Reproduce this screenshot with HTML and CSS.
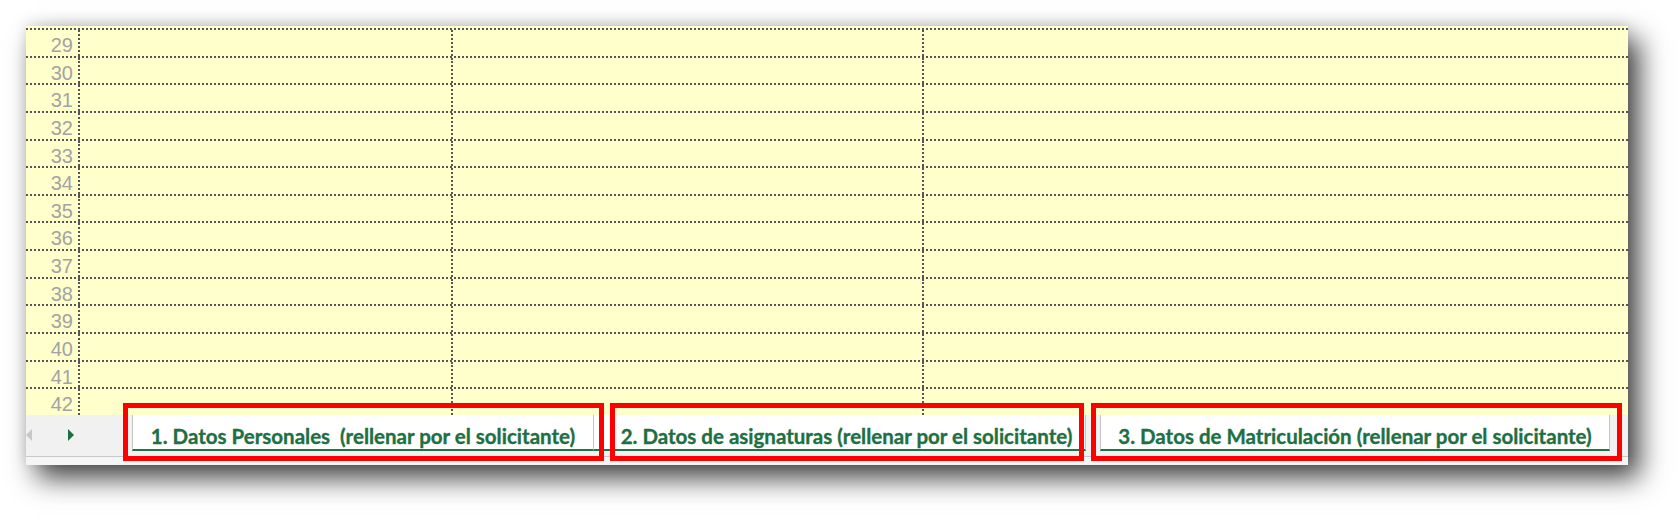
FILE: index.html
```html
<!DOCTYPE html>
<html lang="es">
<head>
<meta charset="utf-8">
<title>Hojas</title>
<link rel="stylesheet" href="styles.css">
</head>
<body>
<div class="page">
  <div class="sheet">
    <div class="grid">
      <div class="row"><div class="rh">29</div><div class="c c1"></div><div class="c c2"></div><div class="c c3"></div></div>
      <div class="row"><div class="rh">30</div><div class="c c1"></div><div class="c c2"></div><div class="c c3"></div></div>
      <div class="row"><div class="rh">31</div><div class="c c1"></div><div class="c c2"></div><div class="c c3"></div></div>
      <div class="row"><div class="rh">32</div><div class="c c1"></div><div class="c c2"></div><div class="c c3"></div></div>
      <div class="row"><div class="rh">33</div><div class="c c1"></div><div class="c c2"></div><div class="c c3"></div></div>
      <div class="row"><div class="rh">34</div><div class="c c1"></div><div class="c c2"></div><div class="c c3"></div></div>
      <div class="row"><div class="rh">35</div><div class="c c1"></div><div class="c c2"></div><div class="c c3"></div></div>
      <div class="row"><div class="rh">36</div><div class="c c1"></div><div class="c c2"></div><div class="c c3"></div></div>
      <div class="row"><div class="rh">37</div><div class="c c1"></div><div class="c c2"></div><div class="c c3"></div></div>
      <div class="row"><div class="rh">38</div><div class="c c1"></div><div class="c c2"></div><div class="c c3"></div></div>
      <div class="row"><div class="rh">39</div><div class="c c1"></div><div class="c c2"></div><div class="c c3"></div></div>
      <div class="row"><div class="rh">40</div><div class="c c1"></div><div class="c c2"></div><div class="c c3"></div></div>
      <div class="row"><div class="rh">41</div><div class="c c1"></div><div class="c c2"></div><div class="c c3"></div></div>
      <div class="row"><div class="rh">42</div><div class="c c1"></div><div class="c c2"></div><div class="c c3"></div></div>
      <div class="gridend"></div>
    </div>
    <div class="tabbar">
      <div class="nav">
        <span class="arr arr-left"></span>
        <span class="arr arr-right"></span>
      </div>
      <div class="tab tab1">1. Datos Personales&nbsp; (rellenar por el solicitante)</div>
      <div class="tab tab2">2. Datos de asignaturas (rellenar por el solicitante)</div>
      <div class="tab tab3">3. Datos de Matriculación (rellenar por el solicitante)</div>
    </div>
    <div class="foot"></div>
  </div>
  <div class="mark mark1"></div>
  <div class="mark mark2"></div>
  <div class="mark mark3"></div>
</div>
</body>
</html>
```
FILE: styles.css
```css
html, body {
  margin: 0;
  padding: 0;
  background: #ffffff;
}

.page {
  position: relative;
  width: 1680px;
  height: 522px;
  box-sizing: border-box;
  padding: 26px 0 0 26px;
  overflow: hidden;
}

.sheet {
  width: 1602px;
  background: #ffffcc;
  box-shadow: 11px 13px 26px rgba(0, 0, 0, 0.75), 0 -3px 12px rgba(0, 0, 0, 0.1);
}

.grid {
  padding-top: 2px;
  background: #ffffcc;
}

.row {
  display: grid;
  grid-template-columns: 54px 373px 471px 1fr;
  height: 27.64px;
  box-sizing: border-box;
  border-top: 2px dotted #555555;
}

.gridend {
  border-top: 2px dotted #555555;
}

.rh {
  border-right: 2px dotted #555555;
  font-family: "Liberation Sans", Arial, sans-serif;
  font-size: 20px;
  line-height: 20px;
  color: #a3a3a3;
  text-align: right;
  padding: 5px 5px 0 0;
}

.c1, .c2 {
  border-right: 2px dotted #555555;
}

.tabbar {
  display: flex;
  align-items: flex-start;
  height: 41px;
  background: #f1f1f1;
  border-bottom: 1px solid #c9c9c9;
  margin-top: -2px;
}

.nav {
  position: relative;
  width: 106px;
  height: 41px;
  flex: none;
}

.arr {
  display: block;
  width: 0;
  height: 0;
  border-top: 6px solid transparent;
  border-bottom: 6px solid transparent;
  position: absolute;
  top: 14px;
}

.arr-left {
  left: 0;
  border-right: 6px solid #c8c8c8;
}

.arr-right {
  left: 42px;
  border-left: 6px solid #1e6f42;
}

.tab {
  flex: none;
  height: 36px;
  box-sizing: border-box;
  background: #ffffff;
  border-bottom: 2px solid #217346;
  font-family: Lato, "Open Sans", sans-serif;
  font-weight: 700;
  font-size: 20.5px;
  line-height: 22px;
  padding-top: 10px;
  color: #1e6f42;
  -webkit-text-stroke: 0.35px #1e6f42;
  text-align: center;
  white-space: nowrap;
}

.tab1 {
  width: 462px;
  border-left: 1px solid #c6c6c6;
  border-right: 1px solid #c6c6c6;
}

.tab2 {
  width: 492px;
  padding-left: 14px;
  border-right: 1px solid #c6c6c6;
}

.tab3 {
  width: 510px;
  margin-left: 14px;
  border-left: 1px solid #c6c6c6;
  border-right: 1px solid #c6c6c6;
}

.foot {
  height: 8px;
  background: #f5f5f5;
}

.mark {
  position: absolute;
  top: 403px;
  height: 58px;
  box-sizing: border-box;
  border: 5px solid #ff0000;
}

.mark1 {
  left: 123px;
  width: 481px;
}

.mark2 {
  left: 610px;
  width: 474px;
}

.mark3 {
  left: 1091px;
  width: 531px;
}
```
